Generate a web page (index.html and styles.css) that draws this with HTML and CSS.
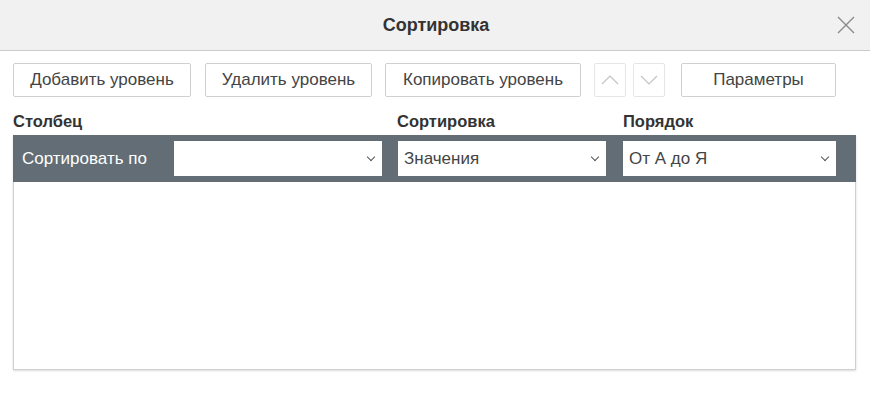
FILE: index.html
```html
<!DOCTYPE html>
<html lang="ru">
  <head>
    <meta charset="UTF-8" />
    <title>Сортировка</title>
    <link rel="stylesheet" href="styles.css">
  </head>
  <body>
    <div class="dialog">
      <div class="header">
        <span class="title">Сортировка</span>
        <button class="close" aria-label="Закрыть">
          <svg width="20" height="20" viewBox="0 0 20 20">
            <path d="M2 2 L18 18 M18 2 L2 18" stroke="#8a8a8a" stroke-width="1.4" fill="none" />
          </svg>
        </button>
      </div>
      <div class="body">
        <div class="toolbar">
          <button class="btn add">Добавить уровень</button>
          <button class="btn del">Удалить уровень</button>
          <button class="btn copy">Копировать уровень</button>
          <button class="btn arrow up" disabled>
            <svg width="18" height="10" viewBox="0 0 18 10"><path d="M1 9 L9 1 L17 9" stroke="#c4c4c4" stroke-width="1.2" fill="none" /></svg>
          </button>
          <button class="btn arrow down" disabled>
            <svg width="18" height="10" viewBox="0 0 18 10"><path d="M1 1 L9 9 L17 1" stroke="#c4c4c4" stroke-width="1.2" fill="none" /></svg>
          </button>
          <button class="btn params">Параметры</button>
        </div>
        <div class="columns">
          <span class="col-name">Столбец</span>
          <span class="col-sort">Сортировка</span>
          <span class="col-order">Порядок</span>
        </div>
        <div class="levels">
          <div class="level">
            <span class="level-label">Сортировать по</span>
            <div class="select s-col"><span></span><i class="chev"></i></div>
            <div class="select s-sort"><span>Значения</span><i class="chev"></i></div>
            <div class="select s-order"><span>От А до Я</span><i class="chev"></i></div>
          </div>
        </div>
      </div>
    </div>
  </body>
</html>
```

FILE: styles.css
```css
html, body {
  margin: 0;
  padding: 0;
  background: white;
}
.dialog {
  width: 870px;
  height: 400px;
  font-family: "Liberation Sans", Arial, sans-serif;
  color: #444;
}
.header {
  height: 50px;
  background: #f1f1f1;
  border-bottom: 1px solid #cbcbcb;
  display: flex;
  align-items: center;
  justify-content: center;
  position: relative;
}
.title {
  font-size: 18px;
  font-weight: bold;
  color: #333;
  margin-left: 2px;
}
.close {
  position: absolute;
  right: 14px;
  top: 15px;
  border: none;
  background: none;
  padding: 0;
  width: 20px;
  height: 20px;
}
.body {
  padding: 12px 14px 0 13px;
}
.toolbar {
  display: flex;
  height: 34px;
}
.btn {
  height: 34px;
  font-family: inherit;
  font-size: 17px;
  color: #444;
  background: white;
  border: 1px solid #cfcfcf;
  border-radius: 2px;
  padding: 0;
  margin-right: 14px;
}
.add { width: 178px; }
.del { width: 167px; margin-right: 13px; }
.copy { width: 196px; margin-right: 13px; }
.arrow {
  width: 32px;
  margin-right: 7px;
  border-color: #e6e6e6;
  display: flex;
  align-items: center;
  justify-content: center;
}
.down { margin-right: 16px; }
.params { width: 155px; margin-right: 0; }
.columns {
  display: flex;
  font-size: 16.5px;
  font-weight: bold;
  color: #333;
  margin-top: 15px;
  height: 22px;
}
.col-name { width: 384px; }
.col-sort { width: 226px; }
.levels {
  width: 841px;
  height: 233px;
  border: 1px solid #d0d0d0;
  box-shadow: 0 1px 2px rgba(0, 0, 0, 0.15);
  margin-top: 1px;
}
.level {
  height: 47px;
  background: #626d75;
  display: flex;
  align-items: center;
  margin: -1px -1px 0 -1px;
}
.level-label {
  color: white;
  font-size: 17px;
  width: 161px;
  padding-left: 9px;
  box-sizing: border-box;
}
.select {
  height: 35px;
  background: white;
  display: flex;
  align-items: center;
  justify-content: space-between;
  padding: 0 8px 0 6px;
  box-sizing: border-box;
  font-size: 17px;
  color: #444;
}
.s-col { width: 208px; margin-right: 16px; }
.s-sort { width: 208px; margin-right: 17px; }
.s-order { width: 213px; }
.chev {
  width: 5px;
  height: 5px;
  border-right: 1.6px solid #555;
  border-bottom: 1.6px solid #555;
  transform: rotate(45deg);
  margin-top: -3px;
}
```
